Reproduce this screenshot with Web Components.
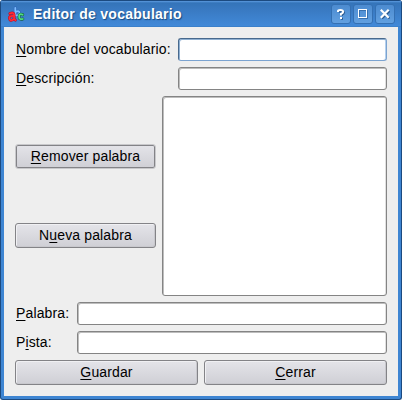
<!DOCTYPE html>
<html lang="es"><head><meta charset="utf-8"><title>Editor de vocabulario</title>
<style>html,body{margin:0;width:402px;height:400px;overflow:hidden;background:#fff}</style></head>
<body><vocab-editor></vocab-editor>
<script>
function define(name, html) {
  const t = document.createElement('template');
  t.innerHTML = html;
  customElements.define(name, class extends HTMLElement {
    constructor() {
      super();
      this.attachShadow({mode: 'open'}).append(t.content.cloneNode(true));
    }
  });
}
define('title-button', `<style>
:host{display:flex;box-sizing:border-box;width:20px;height:20px;border:1px solid #3470b3;border-radius:3px;background:linear-gradient(#4c8bd0,#62a0e0);align-items:center;justify-content:center}
::slotted(svg){display:block}
</style><slot></slot>`);
define('app-icon', `<style>:host{display:block;width:16px;height:16px}svg{display:block;overflow:visible}</style>
<svg width="16" height="16" viewBox="0 0 16 16" fill="none" stroke-linecap="round" stroke-linejoin="round">
<path d="M7.3 1.8V9.2M7.5 6Q11.6 4 11.4 7T7.5 9.4" stroke="#2a62b4" stroke-width="2.8"/>
<path d="M7.3 1.8V9.2M7.5 6Q11.6 4 11.4 7T7.5 9.4" stroke="#7dbcff" stroke-width="1.8"/>
<path d="M14.7 8.7Q11.2 7 11.1 10.5T14.8 13" stroke="#176442" stroke-width="3"/>
<path d="M14.7 8.7Q11.2 7 11.1 10.5T14.8 13" stroke="#4fdc80" stroke-width="1.8"/>
<path d="M1.8 7.5Q6 5.8 6.1 8.8V13.2L7.4 14.2M5.8 10Q1.2 9.6 1.4 12.2Q2 15.9 5.8 13.2" stroke="#b80f25" stroke-width="2.8"/>
<path d="M1.8 7.5Q6 5.8 6.1 8.8V13.2L7.4 14.2M5.8 10Q1.2 9.6 1.4 12.2Q2 15.9 5.8 13.2" stroke="#ff2a36" stroke-width="1.7"/>
</svg>`);
define('title-bar', `<style>
:host{display:flex;box-sizing:border-box;height:27px;padding:5px 6px 0 7px;border-top:1px solid #1c4a80;background:linear-gradient(#5c9be0 0,#3474b9 2px,#3979c1 8px,#4189d8 25px,#3577bd 26px);gap:2px}
h1{margin:0 0 0 7px;flex:1;font:bold 14px/17px "Liberation Sans",Arial,sans-serif;letter-spacing:.27px;color:#fff;text-shadow:1px 1px 1px #174b83;white-space:nowrap}
title-button{margin-top:-2px}
</style><app-icon></app-icon><h1><slot></slot></h1>
<title-button><svg width="10" height="12" viewBox="0 0 10 12" fill="none"><path d="M3 4V3Q3 2 5 2T7.3 3.5Q7.3 5 5.3 6V7.4M5.3 9V11" stroke="#28568a" stroke-width="2" transform="translate(.7 .7)"/><path d="M2 4V3Q2 2 4.5 2T7.2 3.7Q7.2 5 5 6V7.5M5 9V11" stroke="#fff" stroke-width="2"/></svg></title-button>
<title-button><svg width="10" height="10" viewBox="0 0 10 10" shape-rendering="crispEdges"><path d="M1 9H9V1H10V10H1ZM1 1H8V2H2V8H1Z" fill="#3870ad"/><path d="M0 0H9V9H0ZM1 1V8H8V1Z" fill="#fff" fill-rule="evenodd"/></svg></title-button>
<title-button><svg width="10" height="10" viewBox="0 0 10 10" fill="none"><path d="M2 2L9.5 9.5M9.5 2L2 9.5" stroke="#28568a" stroke-width="2"/><path d="M.8 .8L8.7 8.7M8.7 .8L.8 8.7" stroke="#fff" stroke-width="2.2"/></svg></title-button>`);
define('text-field', `<style>
:host{display:block;box-sizing:border-box;flex:1;height:23px;border:1px solid #848484;border-radius:3px;background:#fff;box-shadow:inset 1px 1px #bdbdbd,inset -1px 0 #e0e0e0}
:host([focused]){border-color:#48698d #7ba3d0 #7ba3d0 #48698d;box-shadow:inset 1px 1px #8fb0d2,inset -1px 0 #b4d0ee}
:host([area]){height:200px}
</style>`);
customElements.define('form-field', class extends HTMLElement {
  constructor() {
    super();
    this.attachShadow({mode:'open'}).innerHTML = `<style>
:host{display:flex;height:23px;font:14px/22px "Liberation Sans",Arial,sans-serif;color:#000}
label{box-sizing:border-box;width:var(--label-width);padding-left:1px;letter-spacing:.13px;white-space:nowrap}
</style><label><slot></slot></label><text-field ${this.hasAttribute('focused') ? 'focused' : ''}></text-field>`;
  }
});
define('push-button', `<style>
:host{display:block;box-sizing:border-box;height:25px;border:1px solid #838387;border-radius:3px;background:linear-gradient(#e4e4e9,#cfcfd5);box-shadow:inset 1px 1px #f0f0f3,inset -1px -1px #c8c8cd;font:14px/22px "Liberation Sans",Arial,sans-serif;letter-spacing:.13px;color:#000;text-align:center;white-space:nowrap}
:host([default]){border-color:#c8c8cb;box-shadow:inset 0 0 0 1px #838387}
</style><slot></slot>`);
define('vocab-editor', `<style>
:host{display:flex;flex-direction:column;box-sizing:border-box;width:402px;height:400px;border-radius:3px;overflow:hidden;background:#3e85d2;border:solid #1c4a80;border-width:0 1px 1px}
main{flex:1;margin:0 3px 3px;padding:11px 11px 0;background:#eee;display:flex;flex-direction:column;gap:6px}
.wide{--label-width:163px}.narrow{--label-width:62px}
.middle{display:grid;grid-template-columns:141px 225px;gap:6px}
.actions{display:grid;grid-template-rows:25px 25px;row-gap:54px;padding-top:48px}
.bottom{display:grid;grid-template-columns:183px 183px;gap:6px}
u{text-underline-offset:2px;text-decoration-thickness:1px;text-decoration-skip-ink:none}
</style>
<title-bar>Editor de vocabulario</title-bar>
<main>
<form-field class="wide" focused><u>N</u>ombre del vocabulario:</form-field>
<form-field class="wide"><u>D</u>escripción:</form-field>
<div class="middle"><div class="actions"><push-button default><u>R</u>emover palabra</push-button><push-button>N<u>u</u>eva palabra</push-button></div><text-field area></text-field></div>
<form-field class="narrow"><u>P</u>alabra:</form-field>
<form-field class="narrow">P<u>i</u>sta:</form-field>
<div class="bottom"><push-button><u>G</u>uardar</push-button><push-button><u>C</u>errar</push-button></div>
</main>`);
</script></body></html>
